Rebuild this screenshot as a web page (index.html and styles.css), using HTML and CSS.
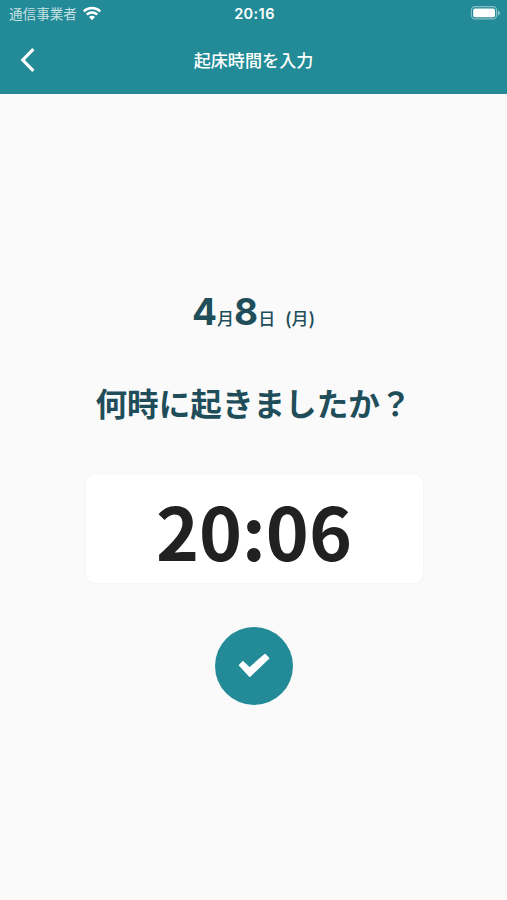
FILE: index.html
```html
<!DOCTYPE html>
<html lang="ja">
<head>
    <meta charset="UTF-8">
    <meta name="viewport" content="width=device-width, initial-scale=1.0">
    <link rel="stylesheet" href="styles.css">
    <title>起床時間を入力</title>
</head>
<body>

<header>
    <div class="status-bar">
        <div class="carrier">
            <span>通信事業者</span>
            <svg class="wifi" width="20" height="16" viewBox="0 0 20 16" fill="none" stroke="#fff" stroke-width="2.5">
                <path d="M1.8 6.3a11.8 11.8 0 0 1 16.4 0"/>
                <path d="M4.8 9.7a7.4 7.4 0 0 1 10.4 0"/>
                <path d="M10 15.2l-3-3.2a4.2 4.2 0 0 1 6 0z" fill="#fff" stroke="none"/>
            </svg>
        </div>
        <div class="clock">20:16</div>
        <svg class="battery" width="31" height="16" viewBox="0 0 31 16">
            <rect x="1.4" y="1.7" width="25.2" height="12.2" rx="3.6" fill="none" stroke="#fff" stroke-opacity="0.45" stroke-width="1.2"/>
            <rect x="3.2" y="3.5" width="21.8" height="8.8" rx="1.8" fill="#fff"/>
            <path d="M28 5.4c2.6 1.2 2.6 3.8 0 5z" fill="#fff" fill-opacity="0.5"/>
        </svg>
    </div>
    <div class="nav-bar">
        <button class="back">
            <svg width="16" height="26" viewBox="0 0 16 26" fill="none" stroke="#fff" stroke-width="3.2">
                <path d="M13.4 2.2L2.8 13l10.6 10.8"/>
            </svg>
        </button>
        <h1>起床時間を入力</h1>
    </div>
</header>

<main>
    <p class="date"><b>4</b>月<b>8</b>日<span class="weekday"><i>(</i>月<i>)</i></span></p>
    <h2>何時に起きましたか？</h2>
    <div class="time">20:06</div>
    <button class="submit">
        <svg width="34" height="26" viewBox="0 0 34 26" fill="#fff" stroke="#fff" stroke-width="1.6" stroke-linejoin="round">
            <path d="M2.6 12.2l3.3-3.3 6.6 6.2L28 1.6l3.6 3.6L12.8 23.2z"/>
        </svg>
    </button>
</main>

</body>
</html>
```
FILE: styles.css
```css
body {
    margin: 0;
    min-height: 100vh;
    background-color: #fafafa;
    font-family: "Noto Sans CJK JP", sans-serif;
    color: #1f4e5a;
}

header {
    height: 94px;
    background-color: #228b97; /* Teal */
    color: #fff;
}

button {
    border: none;
    padding: 0;
    cursor: pointer;
    background: none;
}

svg {
    display: block;
}

.status-bar {
    display: grid;
    grid-template-columns: 1fr auto 1fr;
    align-items: center;
    height: 27px;
    padding: 0 6px 0 9px;
}

.carrier {
    display: flex;
    align-items: center;
    gap: 5px;
    font-size: 13.6px;
    line-height: 27px;
    color: rgba(255, 255, 255, 0.75);
}

.wifi {
    margin-top: -2px;
}

.clock {
    margin-left: -1px;
    font-family: Inter, sans-serif;
    font-size: 14.5px;
    font-weight: 600;
    letter-spacing: 0.4px;
}

.battery {
    justify-self: end;
    margin-top: -1px;
}

.nav-bar {
    display: grid;
    grid-template-columns: 60px 1fr 60px;
    align-items: center;
    height: 66px;
}

.back {
    justify-self: start;
    margin-left: 20px;
}

h1 {
    margin: -2px 0 0;
    text-align: center;
    font-size: 17.1px;
    font-weight: 500;
}

main {
    display: flex;
    flex-direction: column;
    align-items: center;
}

.date {
    display: flex;
    align-items: baseline;
    margin: 195px 0 0;
    font-size: 17px;
    font-weight: 500;
    line-height: 46px;
}

.date b {
    font-family: Inter, sans-serif;
    font-size: 37px;
    font-weight: 700;
}

.weekday {
    margin-left: 10px;
}

.weekday i {
    font-style: normal;
    font-weight: 700;
}

h2 {
    margin: 38px 0 0;
    font-size: 31.6px;
    font-weight: 700;
    line-height: 46px;
}

.time {
    width: 337px;
    height: 109px;
    margin: 49px 0 0 1px;
    border-radius: 9px;
    background-color: #fff;
    box-shadow: 0 0 3px rgba(0, 0, 0, 0.05);
    text-align: center;
    font-size: 73px;
    font-weight: 700;
    line-height: 110px;
    color: #212121;
}

.submit {
    display: flex;
    align-items: center;
    justify-content: center;
    width: 78px;
    height: 78px;
    margin-top: 44px;
    border-radius: 50%;
    background-color: #228b97;
}
```
